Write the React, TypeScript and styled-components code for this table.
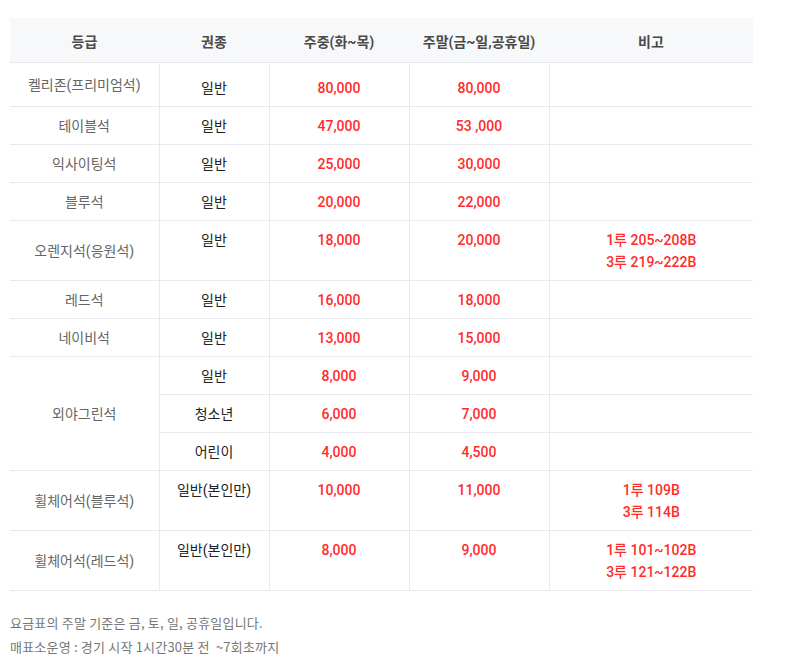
import React from 'react'
import styled, { createGlobalStyle } from 'styled-components';

const GlobalStyle = createGlobalStyle`
  body {
    margin: 0;
    background: #fff;
    font-family: Roboto, "Noto Sans CJK KR", sans-serif;
  }
`;

const Wrap = styled.div`
  padding: 18px 0 0 10px;
`;

const PriceTable = styled.table`
  width: 743px;
  border-collapse: collapse;
  table-layout: fixed;
  font-size: 14px;
  text-align: center;
`;

const HeadCell = styled.th`
  height: 42px;
  padding: 2px 0 0;
  background: #f7f8fa;
  color: #4a4a4a;
  font-weight: 700;
  font-size: 14px;
`;

const GradeCell = styled.td`
  vertical-align: middle;
  color: #666;
  border-top: 1px solid #e8e8ee;
  border-bottom: 1px solid #e8e8ee;
  padding: 1px 0 0;
  line-height: 22px;
`;

const Cell = styled.td<{ $red?: boolean; $first?: boolean }>`
  vertical-align: top;
  padding: ${p => (p.$first ? '14px 0 7px' : '8px 0 7px')};
  line-height: 22px;
  border: 1px solid #e8e8ee;
  border-right: none;
  color: ${p => (p.$red ? '#ff2b2b' : '#222')};
  font-weight: ${p => (p.$red ? 500 : 400)};
`;

const Notes = styled.div`
  margin-top: 20px;
  color: #777;
  font-size: 13px;
  letter-spacing: 0.2px;
  line-height: 24px;
  font-family: "Noto Sans CJK KR", sans-serif;
  white-space: pre;
`;

type Sub = { type: string; weekday: string; weekend: string; note?: string[] };
type Grade = { name: string; subs: Sub[] };

const grades: Grade[] = [
  { name: '켈리존(프리미엄석)', subs: [{ type: '일반', weekday: '80,000', weekend: '80,000' }] },
  { name: '테이블석', subs: [{ type: '일반', weekday: '47,000', weekend: '53 ,000' }] },
  { name: '익사이팅석', subs: [{ type: '일반', weekday: '25,000', weekend: '30,000' }] },
  { name: '블루석', subs: [{ type: '일반', weekday: '20,000', weekend: '22,000' }] },
  { name: '오렌지석(응원석)', subs: [{ type: '일반', weekday: '18,000', weekend: '20,000', note: ['1루 205~208B', '3루 219~222B'] }] },
  { name: '레드석', subs: [{ type: '일반', weekday: '16,000', weekend: '18,000' }] },
  { name: '네이비석', subs: [{ type: '일반', weekday: '13,000', weekend: '15,000' }] },
  {
    name: '외야그린석',
    subs: [
      { type: '일반', weekday: '8,000', weekend: '9,000' },
      { type: '청소년', weekday: '6,000', weekend: '7,000' },
      { type: '어린이', weekday: '4,000', weekend: '4,500' },
    ],
  },
  { name: '휠체어석(블루석)', subs: [{ type: '일반(본인만)', weekday: '10,000', weekend: '11,000', note: ['1루 109B', '3루 114B'] }] },
  { name: '휠체어석(레드석)', subs: [{ type: '일반(본인만)', weekday: '8,000', weekend: '9,000', note: ['1루 101~102B', '3루 121~122B'] }] },
];

function App() {
  return (
    <>
      <GlobalStyle />
      <Wrap>
        <PriceTable>
          <colgroup>
            <col style={{ width: 149 }} />
            <col style={{ width: 110 }} />
            <col style={{ width: 140 }} />
            <col style={{ width: 140 }} />
            <col style={{ width: 204 }} />
          </colgroup>
          <thead>
            <tr>
              <HeadCell>등급</HeadCell>
              <HeadCell>권종</HeadCell>
              <HeadCell>주중(화~목)</HeadCell>
              <HeadCell>주말(금~일,공휴일)</HeadCell>
              <HeadCell>비고</HeadCell>
            </tr>
          </thead>
          <tbody>
            {grades.map((g, gi) =>
              g.subs.map((s, si) => {
                const first = gi === 0;
                return (
                  <tr key={g.name + s.type}>
                    {si === 0 && <GradeCell rowSpan={g.subs.length}>{g.name}</GradeCell>}
                    <Cell $first={first}>{s.type}</Cell>
                    <Cell $first={first} $red>{s.weekday}</Cell>
                    <Cell $first={first} $red>{s.weekend}</Cell>
                    <Cell $first={first} $red>
                      {s.note?.map(n => <div key={n}>{n}</div>)}
                    </Cell>
                  </tr>
                );
              })
            )}
          </tbody>
        </PriceTable>
        <Notes>
          <div>요금표의 주말 기준은 금, 토, 일, 공휴일입니다.</div>
          <div>매표소운영 : 경기 시작 1시간30분 전  ~7회초까지</div>
        </Notes>
      </Wrap>
    </>
  );
}

export default App
